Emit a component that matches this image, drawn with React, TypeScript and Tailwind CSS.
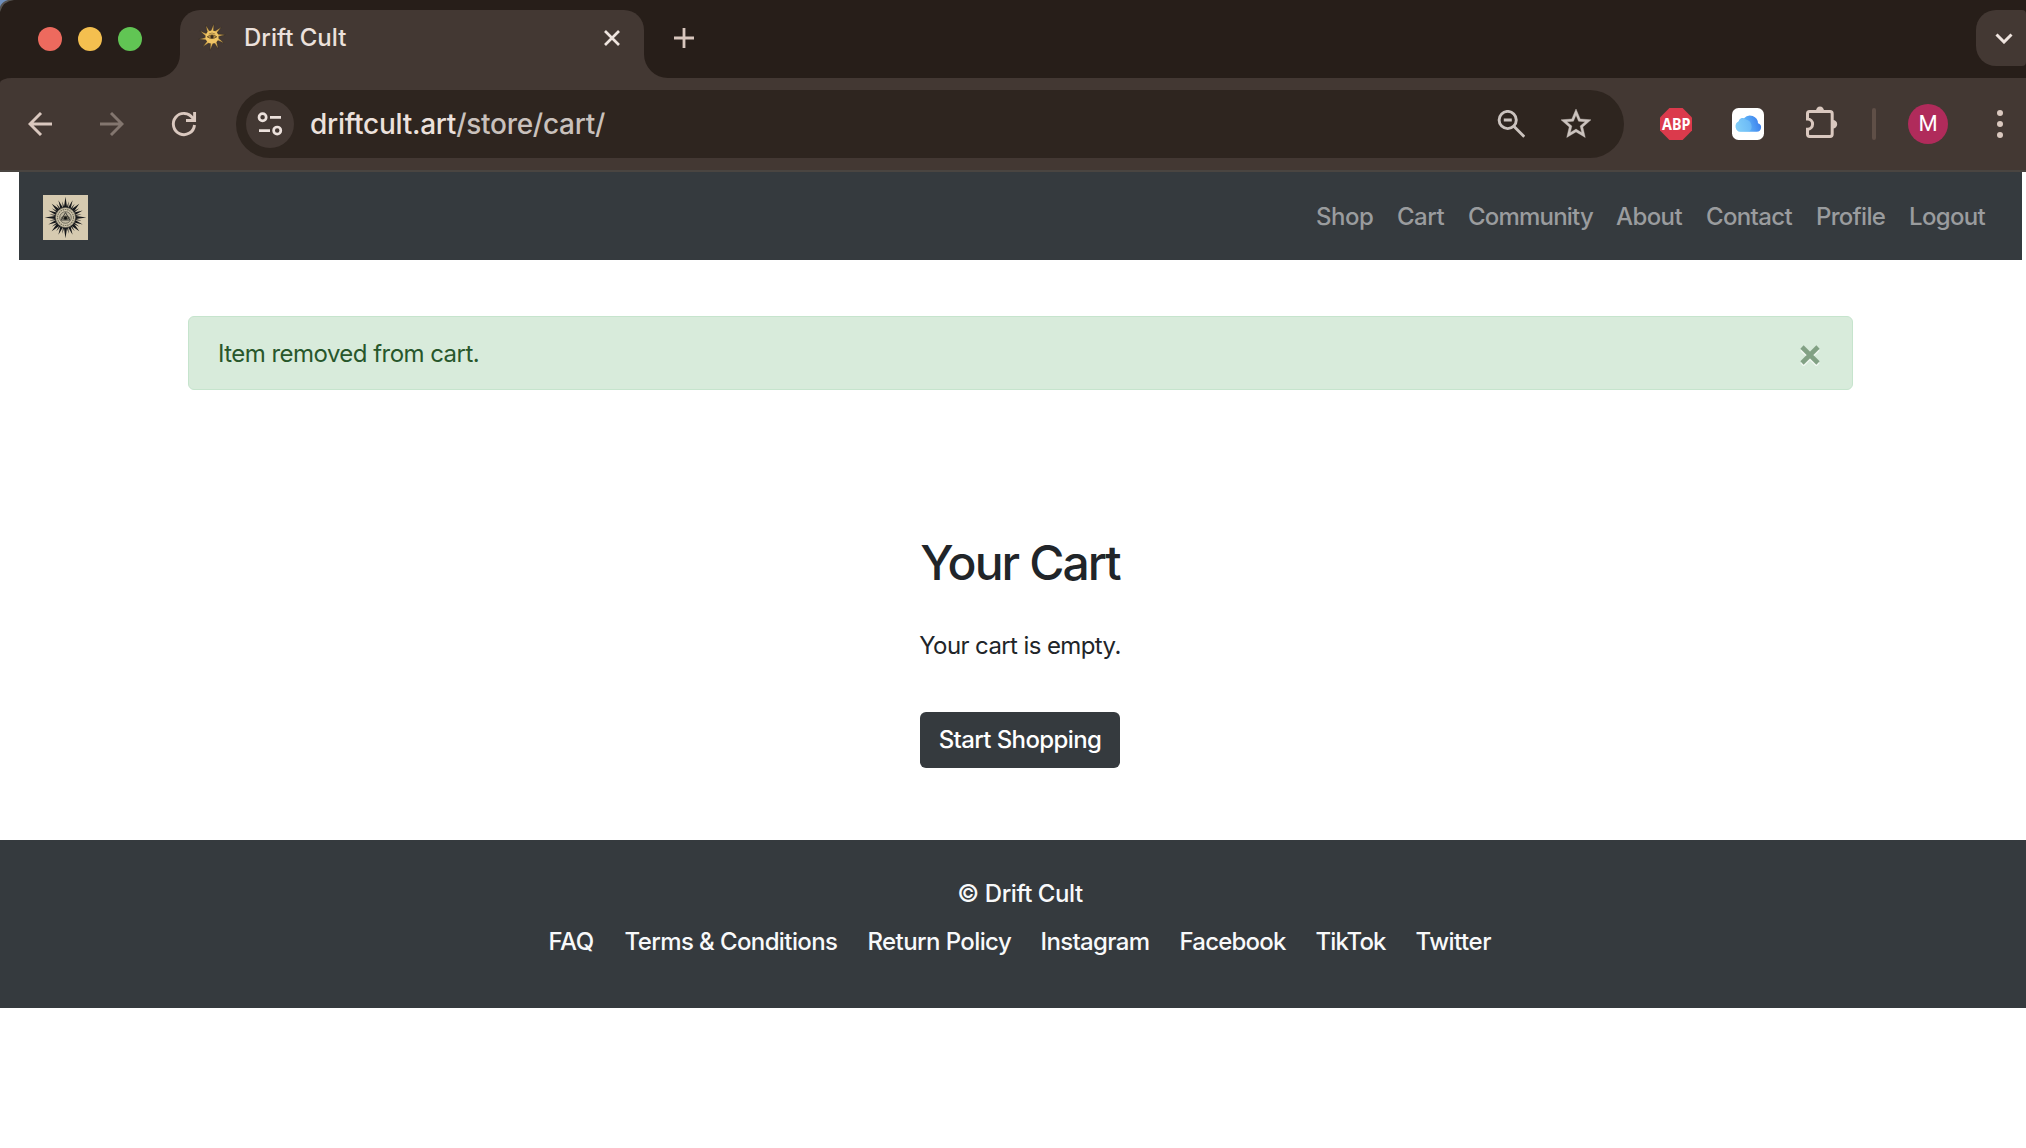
import React from "react";

const navLinks = [
  { label: "Shop", cls: "w-[57px] tracking-[-0.5px]" },
  { label: "Cart", cls: "w-[47px] tracking-[-0.5px]" },
  { label: "Community", cls: "w-[124px] tracking-[-0.8px]" },
  { label: "About", cls: "w-[66px] tracking-[-0.6px]" },
  { label: "Contact", cls: "w-[86px] tracking-[-0.65px]" },
  { label: "Profile", cls: "w-[69px] tracking-[-0.7px]" },
  { label: "Logout", cls: "w-[77px] tracking-[-0.65px]" },
];

const footerLinks = [
  { label: "FAQ", cls: "w-[46px] tracking-[-0.4px]" },
  { label: "Terms & Conditions", cls: "w-[213px] tracking-[-0.6px]" },
  { label: "Return Policy", cls: "w-[143px] tracking-[-0.6px]" },
  { label: "Instagram", cls: "w-[109px] tracking-[-0.65px]" },
  { label: "Facebook", cls: "w-[106px] tracking-[-0.8px]" },
  { label: "TikTok", cls: "w-[70px] tracking-[-0.9px]" },
  { label: "Twitter", cls: "w-[76px] tracking-[-0.5px]" },
];

/** Narrow triangular rays around (c, c). */
function rays(c: number, count: number, inner: number, outer: number, half: number, offset = 0, twist = 0) {
  let d = "";
  for (let i = 0; i < count; i++) {
    const a = offset + (i * 2 * Math.PI) / count;
    const p = (r: number, t: number) => `${(c + r * Math.cos(t)).toFixed(2)} ${(c + r * Math.sin(t)).toFixed(2)}`;
    d += `M${p(inner, a - half)}L${p(outer, a + twist)}L${p(inner, a + half)}Z`;
  }
  return d;
}

function SunLogo() {
  return (
    <svg className="mt-[2px] block size-[45px] bg-[#d6cab0]" viewBox="0 0 45 45">
      <g fill="#15171a">
        <path d={rays(22.5, 4, 9, 20.8, 0.2)} />
        <path d={rays(22.5, 8, 9, 18.6, 0.17, Math.PI / 8)} />
        <path d={rays(22.5, 4, 9, 19.5, 0.22, Math.PI / 4)} />
        <path d={rays(22.5, 16, 9, 16.5, 0.09, Math.PI / 16)} />
      </g>
      <circle cx="22.5" cy="22.5" r="10" fill="#cfc5ac" stroke="#5a574c" strokeWidth="0.6" />
      <circle cx="22.5" cy="22.5" r="8" fill="none" stroke="#77735f" strokeWidth="1.2" strokeDasharray="1.6 0.7" />
      <circle cx="22.5" cy="22.5" r="5.8" fill="#bfb7a0" stroke="#4c4a40" strokeWidth="0.7" />
      <path d="M22.5 17.6 27 25H18Z" fill="none" stroke="#33332f" strokeWidth="0.9" />
      <path d="M18.6 22.7Q22.5 19.4 26.4 22.7 22.5 26 18.6 22.7Z" fill="#77725f" stroke="#22231f" strokeWidth="0.7" />
      <circle cx="22.5" cy="22.9" r="1.5" fill="#101210" />
    </svg>
  );
}

function Favicon() {
  return (
    <svg className="block size-[26px] overflow-visible" viewBox="0 0 26 26">
      <path d={rays(13, 10, 5.5, 13.4, 0.27, -Math.PI / 2, 0.14)} fill="#e0b356" stroke="#2c241c" strokeWidth="0.4" />
      <circle cx="13" cy="13" r="6.6" fill="#f0c566" />
      <path d="M8.2 12.8Q13 9 17.8 12.8 13 16.2 8.2 12.8Z" fill="#b98f45" stroke="#5a4524" strokeWidth="0.8" />
      <circle cx="13" cy="12.7" r="1.6" fill="#3a2c1c" />
      <path d="M9.8 10Q13 8 16.2 10" fill="none" stroke="#8d6c33" strokeWidth="0.7" />
    </svg>
  );
}

function TabStrip() {
  return (
    <div className="flex h-[78px] bg-[#271e19]">
      <svg className="block size-[16px] shrink-0" viewBox="0 0 16 16">
        <path d="M0 0H14Q3 1 0 12Z" fill="#55524f" />
        <path d="M0 0H8Q2 1.5 0 7Z" fill="#6f8fbd" />
      </svg>
      <div className="ml-[22px] flex h-[78px] w-[118px] shrink-0 items-center gap-4">
        <span className="size-6 rounded-full bg-[#ed6a5e]" />
        <span className="size-6 rounded-full bg-[#f4bf4f]" />
        <span className="size-6 rounded-full bg-[#61c554]" />
      </div>
      <svg className="block h-[24px] w-[24px] shrink-0 self-end" viewBox="0 0 24 24">
        <path d="M24 0V24H0A24 24 0 0 0 24 0Z" fill="#433833" />
      </svg>
      <div className="mt-[10px] flex h-[68px] w-[464px] shrink-0 rounded-t-[20px] bg-[#433833] pl-[19px]">
        <div className="mt-[14px]">
          <Favicon />
        </div>
        <span className="ml-[19px] mt-[10px] h-9 text-2xl leading-9 tracking-[0px] text-[#ece1dc]">Drift Cult</span>
        <svg className="ml-auto mr-[24px] mt-[20px] block size-4" viewBox="0 0 16 16" fill="none" stroke="#efe4df" strokeWidth="2.7">
          <path d="M1 1 15 15M15 1 1 15" />
        </svg>
      </div>
      <svg className="block h-[24px] w-[24px] shrink-0 self-end" viewBox="0 0 24 24">
        <path d="M0 0V24H24A24 24 0 0 1 0 0Z" fill="#433833" />
      </svg>
      <svg className="ml-[6px] mt-[28px] block size-5" viewBox="0 0 20 20" fill="none" stroke="#d8c6bd" strokeWidth="2.8">
        <path d="M10 0V20M0 10H20" />
      </svg>
      <div className="ml-auto mt-[10px] flex h-[56px] w-[50px] items-center overflow-hidden rounded-l-[20px] rounded-r-[4px] bg-[#433833] pl-[19px]">
        <svg className="block h-[11px] w-[18px]" viewBox="0 0 18 11" fill="none" stroke="#efe4df" strokeWidth="3">
          <path d="M1.5 1.5 9 9 16.5 1.5" />
        </svg>
      </div>
    </div>
  );
}

function Toolbar() {
  return (
    <div className="bg-[#271e19]">
      <div className="flex h-[94px] items-center rounded-tl-[12px_5px] border-b-2 border-[#4a4541] bg-[#433833]">
        <svg className="ml-[28px] block h-[24px] w-[24px]" viewBox="0 0 24 24" fill="none" stroke="#dac8bf" strokeWidth="2.9">
          <path d="M24 12H2M13 1 2 12 13 23" />
        </svg>
        <svg className="ml-[48px] block h-[24px] w-[24px]" viewBox="0 0 24 24" fill="none" stroke="#83766f" strokeWidth="2.9">
          <path d="M0 12H22M11 1 22 12 11 23" />
        </svg>
        <svg className="ml-[48px] block h-[24px] w-[24px] overflow-visible" viewBox="0 0 24 24" fill="none" stroke="#dac8bf" strokeWidth="2.9">
          <path d="M22.5 13A10.6 10.6 0 1 1 20.8 6.2L22 8.4M14 8.5H22.6V0" />
        </svg>
        <div className="ml-[40px] flex h-[68px] w-[1388px] items-center rounded-full bg-[#2e251f] pl-[10px]">
          <div className="flex size-12 items-center justify-center rounded-full bg-[#433833]">
            <svg className="block h-[24px] w-[26px]" viewBox="0 0 26 24" fill="none" stroke="#ece1dc" strokeWidth="2.7">
              <circle cx="5.6" cy="5.3" r="3.6" />
              <path d="M13 5.3H24M2 18.6H13" />
              <circle cx="20.2" cy="18.6" r="3.6" />
            </svg>
          </div>
          <div className="ml-4 w-[1170px] whitespace-nowrap text-[28px] leading-[42px] tracking-[-0.27px] text-[#ece1dc]">
            driftcult.art<span className="text-[#c9c1bc]">/store/cart/</span>
          </div>
          <svg className="ml-[17px] block size-[28px]" viewBox="0 0 28 28" fill="none" stroke="#cbc3be" strokeWidth="2.9">
            <circle cx="10.7" cy="10" r="8.6" />
            <path d="M6.8 10H14.8M16.8 16.2 27.3 26.8" />
          </svg>
          <svg className="ml-[33px] block size-[36px]" viewBox="0 0 24 24" fill="#cbc3be" stroke="#cbc3be" strokeWidth="0.25">
            <path d="M22 9.24l-7.19-.62L12 2 9.19 8.63 2 9.24l5.46 4.73L5.82 21 12 17.27 18.18 21l-1.63-7.03L22 9.24zM12 15.4l-3.76 2.27 1-4.28-3.32-2.88 4.38-.38L12 6.1l1.71 4.04 4.38.38-3.32 2.88 1 4.28L12 15.4z" />
          </svg>
        </div>
        <svg className="ml-[36px] block size-8 overflow-visible" viewBox="0 0 32 32">
          <path d="M9.4 0H22.6L32 9.4V22.6L22.6 32H9.4L0 22.6V9.4Z" fill="#db3a4c" />
          <text x="2" y="22.2" fontSize="16.5" fontWeight="700" fill="#fff" fontFamily="Noto Sans, sans-serif" textLength="28.4" lengthAdjust="spacingAndGlyphs">
            ABP
          </text>
        </svg>
        <svg className="ml-[40px] block size-8" viewBox="0 0 32 32">
          <defs>
            <linearGradient id="cloud" x1="0" y1="0.6" x2="1" y2="0.4">
              <stop offset="0" stopColor="#7dcbf8" />
              <stop offset="0.5" stopColor="#58aaf6" />
              <stop offset="1" stopColor="#3a7cec" />
            </linearGradient>
          </defs>
          <rect width="32" height="32" rx="6.5" fill="#fff" />
          <path d="M8.5 23.8A5.4 5.4 0 0 1 6.6 13.6 4.6 4.6 0 0 1 12 10.2 8 8 0 0 1 26 15.2 4.4 4.4 0 0 1 24.8 23.8Z" fill="url(#cloud)" />
          <path d="M8.5 23.8A5.4 5.4 0 0 1 6.6 13.6 4.6 4.6 0 0 1 14 11.5 7 7 0 0 1 17 23.8Z" fill="#8ad3f8" opacity="0.45" />
        </svg>
        <svg className="mb-[4px] ml-[42px] block h-[32px] w-[32px]" viewBox="0 0 32 32">
          <path
            d="M1.5 7.5Q1.5 5.5 3.5 5.5H24Q26.2 5.5 26.2 7.7V28.3Q26.2 30.5 24 30.5H3.7Q1.5 30.5 1.5 28.3V23.2A5 5 0 0 0 1.5 13Z"
            fill="none"
            stroke="#dac8bf"
            strokeWidth="3"
          />
          <path d="M10 5A4 4.5 0 0 1 18 5ZM27 14A4.2 4.2 0 0 1 27 22.4Z" fill="#dac8bf" />
        </svg>
        <span className="ml-[34px] h-8 w-1 rounded-full bg-[#5f4f47]" />
        <span className="ml-[32px] flex size-10 items-center justify-center rounded-full bg-[#b02b5b] font-['Roboto',sans-serif] text-[22px] font-normal text-white">
          M
        </span>
        <svg className="ml-[49px] block h-[28px] w-[6px]" viewBox="0 0 6 28" fill="#dac8bf">
          <circle cx="3" cy="3" r="3" />
          <circle cx="3" cy="14" r="3" />
          <circle cx="3" cy="25" r="3" />
        </svg>
      </div>
    </div>
  );
}

export default function App() {
  return (
    <div className="h-[1148px] w-[2026px] overflow-hidden bg-white font-['Inter',sans-serif] text-2xl font-[450] leading-9 text-[#212529]">
      <TabStrip />
      <Toolbar />
      <nav className="ml-[19px] flex h-[88px] w-[2003px] items-center justify-between bg-[#353a3e] pl-[24px] pr-[36px] text-[#9a9c9e]">
        <SunLogo />
        <div className="flex gap-[24px] pt-[2px]">
          {navLinks.map((l) => (
            <a key={l.label} className={`whitespace-nowrap ${l.cls}`}>
              {l.label}
            </a>
          ))}
        </div>
      </nav>
      <div className="ml-[188px] mt-[56px] flex h-[74px] w-[1665px] items-center justify-between rounded-md border border-[#c6e4cd] bg-[#d8ebdb] pl-[29px] pr-[32px] text-[#28572b]">
        <span className="pt-[1px] font-normal tracking-[-0.54px]">Item removed from cart.</span>
        <svg className="mt-1 block h-[21px] w-[20px]" viewBox="0 0 20 21" fill="none" strokeWidth="4.6">
          <path d="M2 4 18 20M18 4 2 20" stroke="#f1f8f2" />
          <path d="M2 2 18 18M18 2 2 18" stroke="#82a184" />
        </svg>
      </div>
      <main className="flex h-[450px] w-[2040px] flex-col items-center pt-[144px]">
        <h1 className="h-[58px] text-5xl font-medium leading-[58px] tracking-[-1.9px]">Your Cart</h1>
        <p className="mt-[36px] font-normal tracking-[-0.6px]">Your cart is empty.</p>
        <button className="mt-[48px] h-[56px] w-[200px] whitespace-nowrap rounded-md bg-[#353a3e] tracking-[-0.6px] text-white">
          Start Shopping
        </button>
      </main>
      <footer className="flex h-[168px] w-[2040px] flex-col items-center bg-[#353a3e] pt-[36px] text-[#f8f9fa]">
        <p className="tracking-[-0.45px]">© Drift Cult</p>
        <div className="mt-[12px] flex gap-[30px]">
          {footerLinks.map((l) => (
            <a key={l.label} className={`whitespace-nowrap ${l.cls}`}>
              {l.label}
            </a>
          ))}
        </div>
      </footer>
    </div>
  );
}
